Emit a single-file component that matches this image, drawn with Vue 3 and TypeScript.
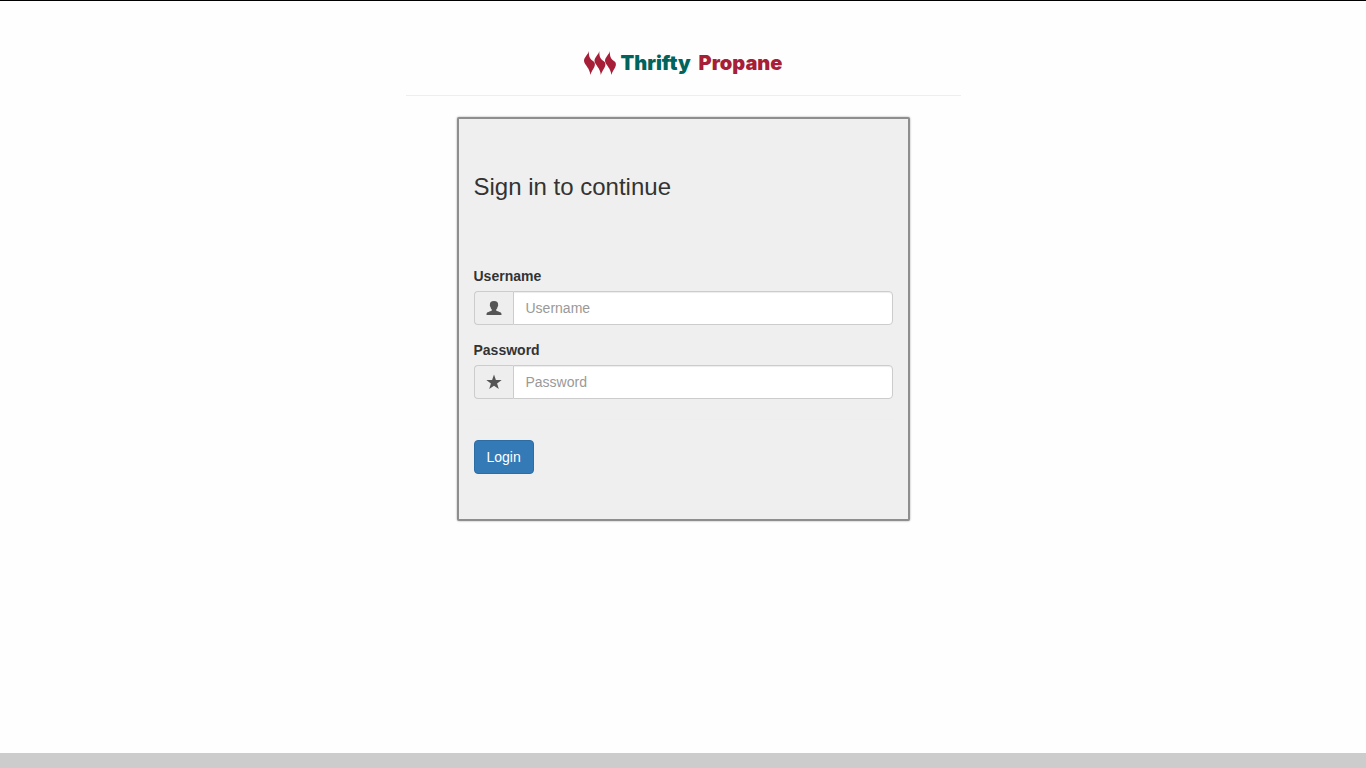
<script setup lang="ts">
import { ref } from 'vue'

const username = ref('')
const password = ref('')
</script>

<template>
  <div class="page">
    <main class="column">
      <header class="brand">
        <svg class="flames" viewBox="0 0 32 24" aria-hidden="true">
          <path
            v-for="i in 3"
            :key="i"
            :transform="`translate(${(i - 1) * 10.5} 0)`"
            d="M4.800 0C4 4 0 6 0 10C0.500 14 6 17 6.300 24C7.500 19.500 11 17 10.900 13C10.500 9.500 7.800 10 6.300 7.500C5 5.500 4.800 3 4.800 0Z"
          />
        </svg>
        <span class="name"><span class="first">Thrifty</span><span>Propane</span></span>
      </header>
      <hr class="rule" />
      <section class="card">
        <h1>Sign in to continue</h1>
        <form @submit.prevent>
          <div class="field">
            <label for="username">Username</label>
            <div class="group">
              <span class="addon">
                <svg viewBox="0 0 16 16" aria-hidden="true">
                  <path d="M8 1C5 1 3.700 2.600 3.900 4.700C3.700 5.200 4 6.500 4.500 6.900C4.700 8.100 5.100 9 5.800 9.600V10.500C5.500 11.300 1.500 11.800 0.800 13C0.500 13.600 0.500 14.300 0.500 15H15.500C15.500 14.300 15.500 13.600 15.200 13C14.500 11.800 10.500 11.300 10.200 10.500V9.600C10.900 9 11.300 8.100 11.500 6.900C12 6.500 12.300 5.200 12.100 4.700C12.300 2.600 11 1 8 1Z" />
                </svg>
              </span>
              <input id="username" v-model="username" type="text" placeholder="Username" />
            </div>
          </div>
          <div class="field">
            <label for="password">Password</label>
            <div class="group">
              <span class="addon">
                <svg viewBox="0 0 16 16" aria-hidden="true">
                  <path d="M8 0.500L9.900 6H15.700L11.100 9.500L12.800 15L8 11.700L3.200 15L4.900 9.500L0.300 6H6.100Z" />
                </svg>
              </span>
              <input id="password" v-model="password" type="password" placeholder="Password" />
            </div>
          </div>
          <hr class="divider" />
          <button type="submit">Login</button>
        </form>
      </section>
    </main>
    <footer class="footer"></footer>
  </div>
</template>

<style>
body {
  margin: 0;
  background: #fefefe;
}
</style>

<style scoped>
* {
  box-sizing: border-box;
}
.page {
  display: flex;
  flex-direction: column;
  min-height: 100vh;
  border-top: 1px solid #000;
  font: 14px/20px "Liberation Sans", Arial, sans-serif;
  color: #333;
}
.column {
  flex: 1;
  width: 100%;
  max-width: 555px;
  margin: 0 auto;
}
.brand {
  display: flex;
  justify-content: center;
  align-items: center;
  gap: 5px;
  padding: 48px 0 18px;
  height: 94px;
}
.flames {
  width: 32px;
  height: 24px;
  fill: #a71e38;
}
.name {
  display: flex;
  gap: 8px;
  font: 900 20px/24px Inter, sans-serif;
  color: #a71e38;
}
.first {
  color: #00645c;
}
.rule,
.divider {
  margin: 0;
  border: 0;
  border-top: 1px solid #eee;
}
.card {
  max-width: 453px;
  margin: 21px auto;
  padding: 55px 15px 45px;
  background: #efefef;
  border: 2px solid #8e8e8e;
  border-radius: 2px;
  box-shadow: 0 0 2px #999;
}
h1 {
  margin: 0 0 66px;
  font-size: 24px;
  font-weight: 400;
  line-height: 26px;
}
.field {
  margin-bottom: 15px;
}
label {
  display: block;
  margin-bottom: 5px;
  font-weight: 700;
}
.group {
  display: flex;
  height: 34px;
}
.addon {
  display: flex;
  align-items: center;
  justify-content: center;
  width: 39px;
  border: 1px solid #ccc;
  border-right: 0;
  border-radius: 4px 0 0 4px;
  background: #eee;
}
.addon svg {
  width: 16px;
  height: 16px;
  fill: #555;
}
input {
  flex: 1;
  min-width: 0;
  padding: 6px 12px;
  border: 1px solid #ccc;
  border-radius: 0 4px 4px 0;
  background: #fff;
  box-shadow: inset 0 1px 1px rgba(0, 0, 0, 0.075);
  font: inherit;
  color: #555;
}
input::placeholder {
  color: #999;
  opacity: 1;
}
.divider {
  margin: 20px 0;
}
button {
  display: block;
  height: 34px;
  padding: 6px 12px;
  border: 1px solid #2e6da4;
  border-radius: 4px;
  background: #337ab7;
  color: #fff;
  font: inherit;
  cursor: pointer;
}
.footer {
  height: 15px;
  background: #ccc;
}
</style>
